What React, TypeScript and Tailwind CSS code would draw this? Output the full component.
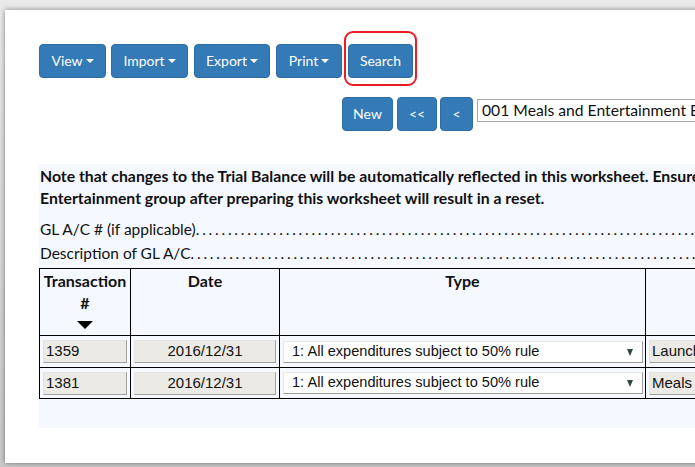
import React from "react";

const Caret = () => (
  <span className="ml-[3px] inline-block h-0 w-0 border-x-[4px] border-t-[4px] border-x-transparent border-t-white align-middle" />
);

const Btn = ({ children, className = "" }: { children: React.ReactNode; className?: string }) => (
  <div
    className={
      "flex h-[34px] shrink-0 items-center justify-center rounded-[4px] border border-[#2e6da4] bg-[#337ab7] pb-[1px] text-[14px] text-white " +
      className
    }
  >
    {children}
  </div>
);

const dots = ". ".repeat(200);

const GreyInput = ({ children, className = "" }: { children: React.ReactNode; className?: string }) => (
  <div
    className={
      "flex h-[23px] items-center overflow-hidden whitespace-nowrap border border-t-[#e4e4e4] border-l-[#e4e4e4] border-r-[#a0a0a0] border-b-[#a0a0a0] bg-[#ebeae5] text-[15px] text-[#111] " +
      className
    }
    style={{ fontFamily: '"Liberation Sans", Arial, sans-serif' }}
  >
    {children}
  </div>
);

const SelectBox = () => (
  <div
    className="relative flex h-[22px] items-center border border-t-[#e6e6e6] border-l-[#e6e6e6] border-r-[#9a9a9a] border-b-[#9a9a9a] bg-white pl-[8px] text-[14.6px] text-[#111]"
    style={{ fontFamily: '"Liberation Sans", Arial, sans-serif' }}
  >
    <span className="whitespace-nowrap">1: All expenditures subject to 50% rule</span>
    <span className="absolute right-[9px] top-[7px] h-0 w-0 border-x-[3px] border-t-[7px] border-x-transparent border-t-[#2f4545]" />
  </div>
);

export default function App() {
  return (
    <div
      className="h-[467px] w-[695px] overflow-hidden bg-gradient-to-b from-[#e9e9e9] to-[#c9c9c9] pl-[5px] pt-[10px]"
      style={{ fontFamily: "Lato, 'Noto Sans', sans-serif" }}
    >
      <div className="relative h-[453px] w-[720px] bg-white shadow-[0_0_5px_rgba(0,0,0,0.45)]">
        {/* toolbar */}
        <div className="flex pl-[34px] pt-[34px]">
          <Btn className="w-[67px]">
            View
            <Caret />
          </Btn>
          <Btn className="ml-[5px] w-[77px]">
            Import
            <Caret />
          </Btn>
          <Btn className="ml-[6px] w-[76px]">
            Export
            <Caret />
          </Btn>
          <Btn className="ml-[6px] w-[66px]">
            Print
            <Caret />
          </Btn>
          <Btn className="ml-[6px] w-[65px]">Search</Btn>
        </div>
        <div className="absolute left-[339px] top-[21px] h-[55px] w-[73px] rounded-[9px] border-2 border-[#ed1c24]" />

        {/* nav row */}
        <div className="mt-[19px] flex items-start pl-[337px]">
          <Btn className="w-[51px]">New</Btn>
          <Btn className="ml-[4px] w-[40px] text-[12px]">&lt;&lt;</Btn>
          <Btn className="ml-[3px] w-[33px] text-[12px]">&lt;</Btn>
          <div className="ml-[4px] mt-[2px] flex h-[23px] w-[300px] shrink-0 items-center whitespace-nowrap border border-[#a9a9a9] pl-[4px] text-[15.7px] text-[#111]">
            001 Meals and Entertainment Expenses
          </div>
        </div>

        {/* note box */}
        <div className="ml-[34px] mt-[33px] h-[264px] bg-[#f5f8fe] pt-[1px] text-[#111]">
          <div className="whitespace-nowrap pl-[1px] text-[15.8px] font-bold leading-[22px]">
            <div>Note that changes to the Trial Balance will be automatically reflected in this worksheet. Ensure that you do not</div>
            <div>Entertainment group after preparing this worksheet will result in a reset.</div>
          </div>
          <div className="mt-[8px] flex whitespace-nowrap text-[15.5px] leading-[24px]">
            <span className="pl-[1px]">GL A/C # (if applicable)</span>
            <span className="overflow-hidden tracking-[-0.6px]">{dots}</span>
          </div>
          <div className="flex whitespace-nowrap text-[15.5px] leading-[24px]">
            <span className="pl-[1px]">Description of GL A/C</span>
            <span className="overflow-hidden tracking-[-0.6px]">{dots}</span>
          </div>

          <table className="mt-[3px] w-[700px] table-fixed border-collapse text-[16px]">
            <colgroup>
              <col className="w-[91px]" />
              <col className="w-[149px]" />
              <col className="w-[366px]" />
              <col />
            </colgroup>
            <thead>
              <tr className="h-[67px] align-top">
                <th className="border border-black pt-[1px] font-bold leading-[22px]">
                  <div>Transaction</div>
                  <div>#</div>
                  <div className="flex justify-center pt-[7px]">
                    <span className="h-0 w-0 border-x-[8px] border-t-[8px] border-x-transparent border-t-black" />
                  </div>
                </th>
                <th className="border border-black pt-[1px] font-bold leading-[22px]">Date</th>
                <th className="border border-black pt-[1px] font-bold leading-[22px]">Type</th>
                <th className="border border-black" />
              </tr>
            </thead>
            <tbody>
              <tr className="h-[32px]">
                <td className="border border-black px-[3px]">
                  <GreyInput className="pl-[2px]">1359</GreyInput>
                </td>
                <td className="border border-black px-[3px]">
                  <GreyInput className="justify-center">2016/12/31</GreyInput>
                </td>
                <td className="border border-black pl-[3px] pr-[2px]">
                  <SelectBox />
                </td>
                <td className="border border-black pl-[3px]">
                  <GreyInput className="pl-[2px]">Launch meeting</GreyInput>
                </td>
              </tr>
              <tr className="h-[31px]">
                <td className="border border-black px-[3px]">
                  <GreyInput className="pl-[2px]">1381</GreyInput>
                </td>
                <td className="border border-black px-[3px]">
                  <GreyInput className="justify-center">2016/12/31</GreyInput>
                </td>
                <td className="border border-black pl-[3px] pr-[2px]">
                  <SelectBox />
                </td>
                <td className="border border-black pl-[3px]">
                  <GreyInput className="pl-[2px]">Meals and entertainment</GreyInput>
                </td>
              </tr>
            </tbody>
          </table>
        </div>
      </div>
    </div>
  );
}
